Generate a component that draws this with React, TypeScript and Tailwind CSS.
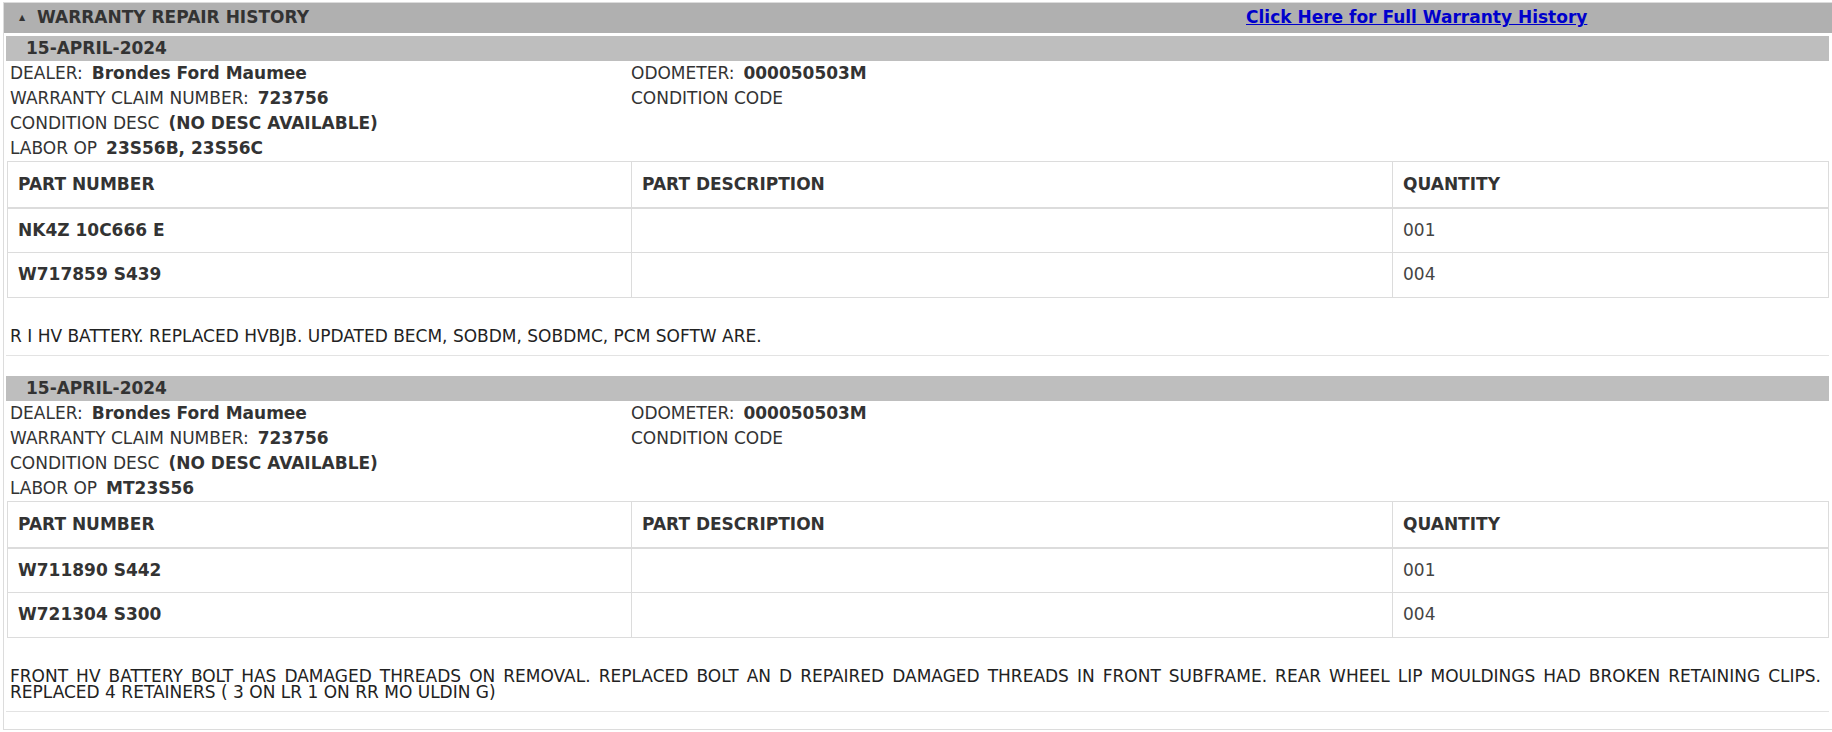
type Part = { number: string; description: string; qty: string };

type Claim = {
  date: string;
  dealer: string;
  claimNumber: string;
  odometer: string;
  conditionDesc: string;
  laborOp: string;
  parts: Part[];
  comment: string;
};

const claims: Claim[] = [
  {
    date: "15-APRIL-2024",
    dealer: "Brondes Ford Maumee",
    claimNumber: "723756",
    odometer: "000050503M",
    conditionDesc: "(NO DESC AVAILABLE)",
    laborOp: "23S56B, 23S56C",
    parts: [
      { number: "NK4Z 10C666 E", description: "", qty: "001" },
      { number: "W717859 S439", description: "", qty: "004" },
    ],
    comment: "R I HV BATTERY. REPLACED HVBJB. UPDATED BECM, SOBDM, SOBDMC, PCM SOFTW ARE.",
  },
  {
    date: "15-APRIL-2024",
    dealer: "Brondes Ford Maumee",
    claimNumber: "723756",
    odometer: "000050503M",
    conditionDesc: "(NO DESC AVAILABLE)",
    laborOp: "MT23S56",
    parts: [
      { number: "W711890 S442", description: "", qty: "001" },
      { number: "W721304 S300", description: "", qty: "004" },
    ],
    comment:
      "FRONT HV BATTERY BOLT HAS DAMAGED THREADS ON REMOVAL. REPLACED BOLT AN D REPAIRED DAMAGED THREADS IN FRONT SUBFRAME. REAR WHEEL LIP MOULDINGS HAD BROKEN RETAINING CLIPS. REPLACED 4 RETAINERS ( 3 ON LR 1 ON RR MO ULDIN G)",
  },
];

function Field({ label, value }: { label: string; value?: string }) {
  return (
    <div className="h-[25px] leading-[25px] whitespace-nowrap">
      {label}
      {value && <span className="ml-[9px] font-bold">{value}</span>}
    </div>
  );
}

function ClaimBlock({ claim }: { claim: Claim }) {
  return (
    <div className="mb-[20px] last:mb-[17px]">
      <div className="h-[25px] bg-[#bebebe] pl-[20px] leading-[25px] font-bold text-[#333]">
        {claim.date}
      </div>
      <div className="grid grid-cols-[621px_1fr] pl-[4px]">
        <div>
          <Field label="DEALER:" value={claim.dealer} />
          <Field label="WARRANTY CLAIM NUMBER:" value={claim.claimNumber} />
          <Field label="CONDITION DESC" value={claim.conditionDesc} />
          <Field label="LABOR OP" value={claim.laborOp} />
        </div>
        <div>
          <Field label="ODOMETER:" value={claim.odometer} />
          <Field label="CONDITION CODE" />
        </div>
      </div>
      <table className="ml-[1px] w-[1822px] table-fixed border-collapse">
        <colgroup>
          <col className="w-[624px]" />
          <col className="w-[761px]" />
          <col />
        </colgroup>
        <thead>
          <tr className="h-[46px] border-b-2 border-[#dcdcdc]">
            <th className="border border-[#dcdcdc] px-[10px] text-left font-bold">PART NUMBER</th>
            <th className="border border-[#dcdcdc] px-[10px] text-left font-bold">PART DESCRIPTION</th>
            <th className="border border-[#dcdcdc] px-[10px] text-left font-bold">QUANTITY</th>
          </tr>
        </thead>
        <tbody>
          {claim.parts.map((p) => (
            <tr key={p.number} className="h-[45px]">
              <td className="border border-[#dcdcdc] px-[10px] font-bold">{p.number}</td>
              <td className="border border-[#dcdcdc] px-[10px]">{p.description}</td>
              <td className="border border-[#dcdcdc] px-[10px] text-[#444]">{p.qty}</td>
            </tr>
          ))}
        </tbody>
      </table>
      <div className="border-b border-[#e3e3e3] pt-[30px] pr-[8px] pb-[11px] pl-[4px] text-justify leading-[16px] text-[#222]">
        {claim.comment}
      </div>
    </div>
  );
}

export default function App() {
  return (
    <div className="min-h-[732px] bg-white pt-[2px] pl-[3px] font-['DejaVu_Sans',Verdana,sans-serif] text-[17px] text-[#333]">
      <div className="border-t border-l border-b border-[#dcdcdc]">
        <div className="flex h-[30px] items-center bg-[#b0b0b0]">
          <span className="ml-[15px] w-[18px] text-[8px] text-[#333]">▲</span>
          <span className="w-[1209px] font-bold text-[#333]">WARRANTY REPAIR HISTORY</span>
          <a href="#" className="font-bold text-[#0000cc] underline">
            Click Here for Full Warranty History
          </a>
        </div>
        <div className="pt-[3px] pr-[3px] pl-[2px]">
          {claims.map((c, i) => (
            <ClaimBlock key={i} claim={c} />
          ))}
        </div>
      </div>
    </div>
  );
}
